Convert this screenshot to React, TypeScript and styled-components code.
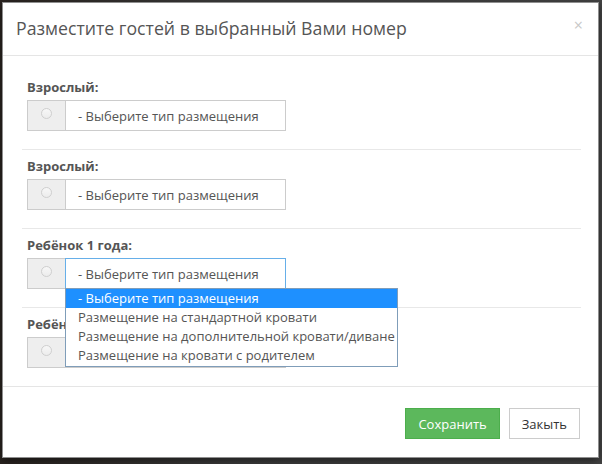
import * as React from 'react'
import styled, { createGlobalStyle } from 'styled-components';

const GlobalStyle = createGlobalStyle`
    html, body {
        margin: 0;
        padding: 0;
        background: #3b3b3b;
    }
    body {
        font-family: "Open Sans", "Liberation Sans", sans-serif;
        font-size: 13px;
        color: #555;
    }
`;

const Backdrop = styled.div`
    width: 602px;
    height: 464px;
    padding: 2px 0 0 2px;
    box-sizing: border-box;
    background: linear-gradient(90deg, #2a2420 0%, #3d3d3d 40%, #444 100%);
`;

const Modal = styled.div`
    width: 597px;
    box-sizing: border-box;
    background: #fff;
    border: 1px solid #8f8f8f;
    box-shadow: 0 3px 9px rgba(0, 0, 0, 0.5);
`;

const Header = styled.div`
    display: flex;
    align-items: flex-start;
    justify-content: space-between;
    padding: 13px 15px 14px 13px;
    border-bottom: 1px solid #e5e5e5;
`;

const Title = styled.h4`
    margin: 0;
    font-size: 17.7px;
    font-weight: 400;
    line-height: 25px;
    color: #555;
`;

const Close = styled.span`
    font-size: 16px;
    line-height: 18px;
    color: #c8c8c8;
`;

const Body = styled.div`
    padding: 15px 17px 0 19px;
    border-bottom: 1px solid #e5e5e5;
`;

const Group = styled.div<{ $first?: boolean }>`
    padding: 6px 5px 18px;
    border-top: ${p => (p.$first ? 'none' : '1px solid #e8e8e8')};
`;

const Label = styled.div`
    font-weight: 700;
    font-size: 13px;
    line-height: 20px;
    color: #555;
    margin-bottom: 3px;
`;

const InputGroup = styled.div`
    display: flex;
    width: 259px;
    height: 31px;
`;

const Addon = styled.div`
    width: 38px;
    box-sizing: border-box;
    background: #eee;
    border: 1px solid #ccc;
    border-right: none;
    display: flex;
    justify-content: center;
    padding-top: 7px;
`;

const Radio = styled.span`
    width: 11px;
    height: 11px;
    box-sizing: border-box;
    border-radius: 50%;
    border: 1px solid #cfcfcf;
    background: linear-gradient(#f7f7f7, #ececec);
`;

const SelectWrap = styled.div`
    position: relative;
    flex: 1;
`;

const Select = styled.div<{ $focused?: boolean }>`
    height: 31px;
    box-sizing: border-box;
    border: 1px solid ${p => (p.$focused ? '#66afe9' : '#ccc')};
    padding: 0 12px;
    display: flex;
    align-items: center;
    color: #555;
    background: #fff;
`;

const Dropdown = styled.ul`
    position: absolute;
    top: 30px;
    left: 0;
    width: 333px;
    margin: 0;
    padding: 0 0 1px;
    list-style: none;
    background: #fff;
    border: 1px solid #7f9db9;
    box-sizing: border-box;
    z-index: 5;
`;

const Option = styled.li<{ $active?: boolean }>`
    height: 19px;
    line-height: 19px;
    padding-left: 12px;
    font-size: 13px;
    white-space: nowrap;
    color: ${p => (p.$active ? '#fff' : '#555')};
    background: ${p => (p.$active ? '#1e90ff' : 'transparent')};
`;

const Footer = styled.div`
    display: flex;
    justify-content: flex-end;
    gap: 9px;
    padding: 21px 18px 18px;
`;

const Button = styled.button<{ $primary?: boolean }>`
    height: 31px;
    padding: 0 ${p => (p.$primary ? '12px' : '12px')};
    font-family: "Open Sans", "Liberation Sans", sans-serif;
    font-size: 13px;
    border-radius: 0;
    border: 1px solid ${p => (p.$primary ? '#4cae4c' : '#ccc')};
    background: ${p => (p.$primary ? '#5cb85c' : '#fff')};
    color: ${p => (p.$primary ? '#fff' : '#333')};
`;

const options = [
    '- Выберите тип размещения',
    'Размещение на стандартной кровати',
    'Размещение на дополнительной кровати/диване',
    'Размещение на кровати с родителем',
];

const guests = [
    { label: 'Взрослый:', open: false },
    { label: 'Взрослый:', open: false },
    { label: 'Ребёнок 1 года:', open: true },
    { label: 'Ребёнок 1 года:', open: false },
];

export default function App() {
    return (
        <>
            <GlobalStyle />
            <Backdrop>
                <Modal>
                    <Header>
                        <Title>Разместите гостей в выбранный Вами номер</Title>
                        <Close>×</Close>
                    </Header>
                    <Body>
                        {guests.map((g, i) => (
                            <Group key={i} $first={i === 0}>
                                <Label>{g.label}</Label>
                                <InputGroup>
                                    <Addon><Radio /></Addon>
                                    <SelectWrap>
                                        <Select $focused={g.open}>{options[0]}</Select>
                                        {g.open && (
                                            <Dropdown>
                                                {options.map((o, j) => (
                                                    <Option key={j} $active={j === 0}>{o}</Option>
                                                ))}
                                            </Dropdown>
                                        )}
                                    </SelectWrap>
                                </InputGroup>
                            </Group>
                        ))}
                    </Body>
                    <Footer>
                        <Button $primary>Сохранить</Button>
                        <Button>Закыть</Button>
                    </Footer>
                </Modal>
            </Backdrop>
        </>
    )
}
